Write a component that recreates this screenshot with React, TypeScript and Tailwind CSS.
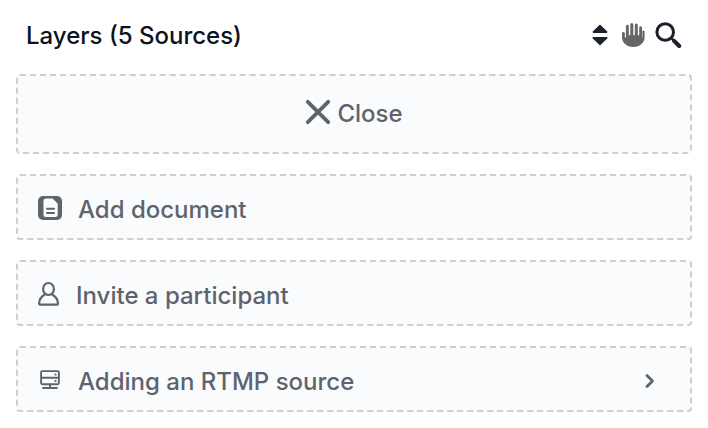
import type { ReactNode } from "react";

type SourceButtonProps = {
    icon: ReactNode;
    label: string;
    trailing?: ReactNode;
};

function SortIcon() {
    return (
        <svg width="18" height="22" viewBox="0 0 18 22" fill="currentColor" aria-hidden="true">
            <path d="M9 .4 16.2 7.6Q16.8 9 15.6 9H2.4Q1.2 9 1.8 7.6Z" />
            <path d="M9 21.6 16.2 14.4Q16.8 13 15.6 13H2.4Q1.2 13 1.8 14.4Z" />
        </svg>
    );
}

function HandIcon() {
    return (
        <svg width="25" height="26" viewBox="0 0 25 26" aria-hidden="true">
            <path
                fill="currentColor"
                d="M1 11.4a1.4 1.4 0 0 1 2.8 0v4.2h1.1V4.1a1.4 1.4 0 0 1 2.9 0v9.1h1.5V2.4a1.5 1.5 0 0 1 3 0v10.8h1.5V2.9a1.5 1.5 0 0 1 3 0v10.3h1.4V5.6a1.4 1.4 0 0 1 2.8 0v9.9h.4V9a1.3 1.3 0 0 1 2.2.6v5.2c0 6-4.4 10.2-11.3 10.2S1 20.8 1 14.8Z"
            />
        </svg>
    );
}

function SearchIcon() {
    return (
        <svg width="28" height="28" viewBox="0 0 28 28" fill="none" stroke="currentColor" aria-hidden="true">
            <circle cx="11.2" cy="11" r="8.3" strokeWidth="3" />
            <path d="m16.9 16.7 3 3" strokeWidth="2.6" />
            <path d="m20.2 20 5 5" strokeWidth="4" strokeLinecap="round" />
        </svg>
    );
}

function CloseIcon() {
    return (
        <svg className="mb-1" width="26" height="26" viewBox="0 0 26 26" fill="none" stroke="currentColor" aria-hidden="true">
            <path d="m2.8 2.8 20.4 20.4M23.2 2.8 2.8 23.2" strokeWidth="3.8" strokeLinecap="round" />
        </svg>
    );
}

function DocumentIcon() {
    return (
        <svg width="24" height="26" viewBox="0 0 24 26" aria-hidden="true">
            <rect y="1" width="24" height="24" rx="5" fill="currentColor" />
            <path d="M8 3.5h6.7l5 5.2V19.5a2.5 2.5 0 0 1-2.5 2.5H8a2.5 2.5 0 0 1-2.5-2.5V6A2.5 2.5 0 0 1 8 3.5Z" fill="#fafbfd" />
            <path d="M9 13.7h7M9 18h7" stroke="currentColor" strokeWidth="2" strokeLinecap="round" />
        </svg>
    );
}

function PersonIcon() {
    return (
        <svg width="22" height="26" viewBox="0 0 22 26" fill="none" stroke="currentColor" strokeWidth="2.2" aria-hidden="true">
            <ellipse cx="10.5" cy="8" rx="5.4" ry="6" />
            <path d="M7 13.4C3.5 15.2 1.3 18.5 1.1 22.3Q1 23.6 2.3 23.6H18.9Q20.1 23.6 20 22.3C19.7 18.5 17.5 15.2 14 13.4" />
        </svg>
    );
}

function ServerIcon() {
    return (
        <svg className="mx-0.5" width="20" height="20" viewBox="0 0 20 20" fill="none" stroke="currentColor" strokeWidth="1.9" aria-hidden="true">
            <rect x="1.1" y="1.1" width="17.8" height="13.2" rx="1.2" />
            <path d="M1 7.7h18M10 14.5v3.4" />
            <path d="M3 18h4.6M8.6 18h2.8M12.4 18H17" strokeLinecap="round" />
            <path d="M14.6 4.5h1.8M14.6 11h1.8" />
        </svg>
    );
}

function ChevronIcon() {
    return (
        <svg width="10" height="16" viewBox="0 0 10 16" fill="none" stroke="currentColor" aria-hidden="true">
            <path d="m2 2.5 5.5 5.5L2 13.5" strokeWidth="2.8" strokeLinecap="round" strokeLinejoin="round" />
        </svg>
    );
}

function SourceButton({ icon, label, trailing }: SourceButtonProps) {
    return (
        <button
            type="button"
            className="flex w-full items-center gap-4 rounded border-2 border-dashed border-[#cfcfcf] bg-[#fafbfd] px-5 pt-[13px] pb-[11px]"
        >
            {icon}
            <span className="pt-1 leading-[34px]">{label}</span>
            {trailing && <span className="ml-auto pt-0.5 pr-[15px]">{trailing}</span>}
        </button>
    );
}

export default function App() {
    return (
        <section className="bg-white px-4 py-4 font-['Inter',sans-serif] text-2xl font-medium text-[#5f636d]">
            <header className="mb-5 flex items-center justify-between px-2.5">
                <h2 className="pt-0.5 leading-9 text-[#0b1220]">Layers (5 Sources)</h2>
                <div className="flex items-center gap-2 text-[#1d2129]">
                    <button type="button" aria-label="Sort layers" className="mr-1">
                        <SortIcon />
                    </button>
                    <button type="button" aria-label="Move layers" className="text-[#666666]">
                        <HandIcon />
                    </button>
                    <button type="button" aria-label="Search layers">
                        <SearchIcon />
                    </button>
                </div>
            </header>

            <div className="flex flex-col gap-5">
                <button
                    type="button"
                    className="flex w-full items-center justify-center gap-1.5 rounded border-2 border-dashed border-[#cfcfcf] bg-[#fafbfd] py-5"
                >
                    <CloseIcon />
                    <span className="leading-9">Close</span>
                </button>
                <SourceButton icon={<DocumentIcon />} label="Add document" />
                <SourceButton icon={<PersonIcon />} label="Invite a participant" />
                <SourceButton icon={<ServerIcon />} label="Adding an RTMP source" trailing={<ChevronIcon />} />
            </div>
        </section>
    );
}
